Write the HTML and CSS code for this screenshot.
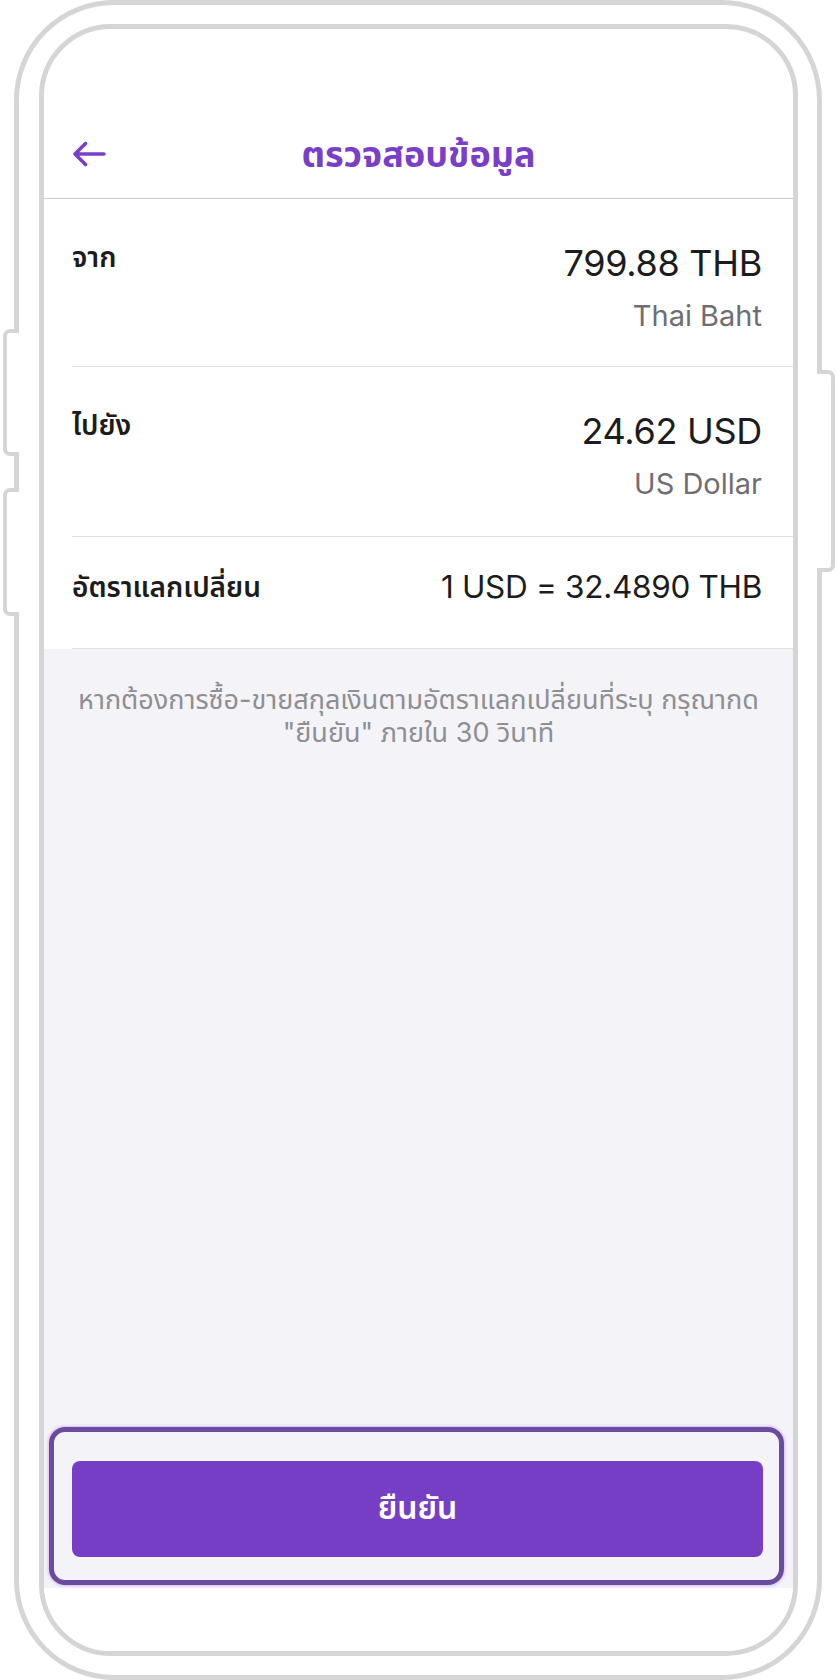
FILE: index.html
```html
<!DOCTYPE html>
<html lang="th">
<head>
  <meta charset="UTF-8" />
  <meta name="viewport" content="width=device-width, initial-scale=1.0" />
  <title>ตรวจสอบข้อมูล</title>
  <link rel="stylesheet" href="styles.css">
</head>
<body>
  <div class="phone">
    <span class="side-btn left-top"></span>
    <span class="side-btn left-bottom"></span>
    <span class="side-btn right"></span>
    <div class="screen">
      <div class="status"></div>
      <header class="topbar">
        <svg class="back" width="34" height="26" viewBox="0 0 34 26" aria-label="back">
          <path d="M32 13H3M13.5 2.5L3 13l10.5 10.5" fill="none" stroke="#7a3fc8" stroke-width="3.6" stroke-linecap="round" stroke-linejoin="round"/>
        </svg>
        <h1>ตรวจสอบข้อมูล</h1>
        <div></div>
      </header>
      <div class="rows">
        <div class="row">
          <span class="label">จาก</span>
          <div class="amount">
            <div class="value">799.88 THB</div>
            <div class="sub">Thai Baht</div>
          </div>
        </div>
        <div class="row">
          <span class="label">ไปยัง</span>
          <div class="amount">
            <div class="value">24.62 USD</div>
            <div class="sub">US Dollar</div>
          </div>
        </div>
        <div class="row rate">
          <span class="label">อัตราแลกเปลี่ยน</span>
          <div class="value">1 USD = 32.4890 THB</div>
        </div>
      </div>
      <div class="content">
        <p class="note">หากต้องการซื้อ-ขายสกุลเงินตามอัตราแลกเปลี่ยนที่ระบุ กรุณากด<br>"ยืนยัน" ภายใน 30 วินาที</p>
        <div class="ring">
          <button class="confirm" id="confirm-btn">ยืนยัน</button>
        </div>
      </div>
      <div class="home"></div>
    </div>
  </div>
</body>
</html>
```

FILE: styles.css
```css
* {
  box-sizing: border-box;
  margin: 0;
  padding: 0;
}
body {
  width: 837px;
  height: 1680px;
  background-color: #fff;
  font-family: Inter, "Noto Sans Thai", "Noto Sans Thai UI", "Noto Sans", sans-serif;
  color: #1c1c1e;
  overflow: hidden;
}
.phone {
  position: relative;
  display: flex;
  flex-direction: column;
  width: 808px;
  height: 1680px;
  margin-left: 14px;
  padding: 19px 19px 19px 20px;
  border: 5px solid #d5d5d7;
  border-radius: 100px;
}
.side-btn {
  position: absolute;
  background-color: #fff;
  border: 4px solid #d5d5d7;
}
.left-top,
.left-bottom {
  left: -16px;
  width: 16px;
  border-right: none;
  border-radius: 7px 0 0 7px;
}
.left-top {
  top: 324px;
  height: 127px;
}
.left-bottom {
  top: 483px;
  height: 128px;
}
.right {
  right: -18px;
  top: 365px;
  width: 18px;
  height: 202px;
  border-left: none;
  border-radius: 0 7px 7px 0;
}
.screen {
  flex: 1;
  display: flex;
  flex-direction: column;
  border: 5px solid #d5d5d7;
  border-radius: 72px;
  overflow: hidden;
  background-color: #fff;
}
.status {
  height: 76px;
}
.topbar {
  display: grid;
  grid-template-columns: 1fr auto 1fr;
  align-items: center;
  height: 94px;
  padding: 5px 28px 0;
  border-bottom: 1px solid #c8c7cc;
}
.back {
  display: block;
}
.topbar h1 {
  font-size: 36px;
  font-weight: 700;
  color: #7a3fc8;
  line-height: 46px;
}
.rows {
  background-color: #fff;
}
.row {
  display: flex;
  justify-content: space-between;
  align-items: flex-start;
  margin-left: 28px;
  padding: 42px 31px 0 0;
  height: 168px;
  border-bottom: 1px solid #e1e1e4;
}
.row:nth-child(2) {
  height: 170px;
}
.row.rate {
  height: 112px;
  padding-top: 30px;
}
.label {
  font-size: 28px;
  font-weight: 600;
  line-height: 32px;
}
.rate .label {
  line-height: 40px;
}
.amount {
  text-align: right;
}
.value {
  font-size: 36px;
  line-height: 44px;
  letter-spacing: -0.3px;
}
.rate .value {
  font-size: 31.5px;
  line-height: 40px;
}
.sub {
  margin-top: 13px;
  font-size: 29px;
  line-height: 36px;
  color: #6e6e73;
}
.content {
  flex: 1;
  display: flex;
  flex-direction: column;
  justify-content: space-between;
  background-color: #f4f3f7;
}
.note {
  padding: 34px 24px 0;
  font-size: 27px;
  line-height: 33px;
  text-align: center;
  color: #8e8e93;
}
.ring {
  margin: 0 9px 3px 5px;
  padding: 29px 16px 23px 18px;
  border: 5px solid #6a4c9e;
  border-radius: 16px;
  box-shadow: 0 0 3px 1px #d9b8f0;
}
.confirm {
  display: block;
  width: 100%;
  height: 96px;
  border: none;
  border-radius: 8px;
  background-color: #763ec5;
  color: #fff;
  font-family: inherit;
  font-size: 32px;
  font-weight: 600;
}
.home {
  height: 63px;
  background-color: #fff;
}
```
